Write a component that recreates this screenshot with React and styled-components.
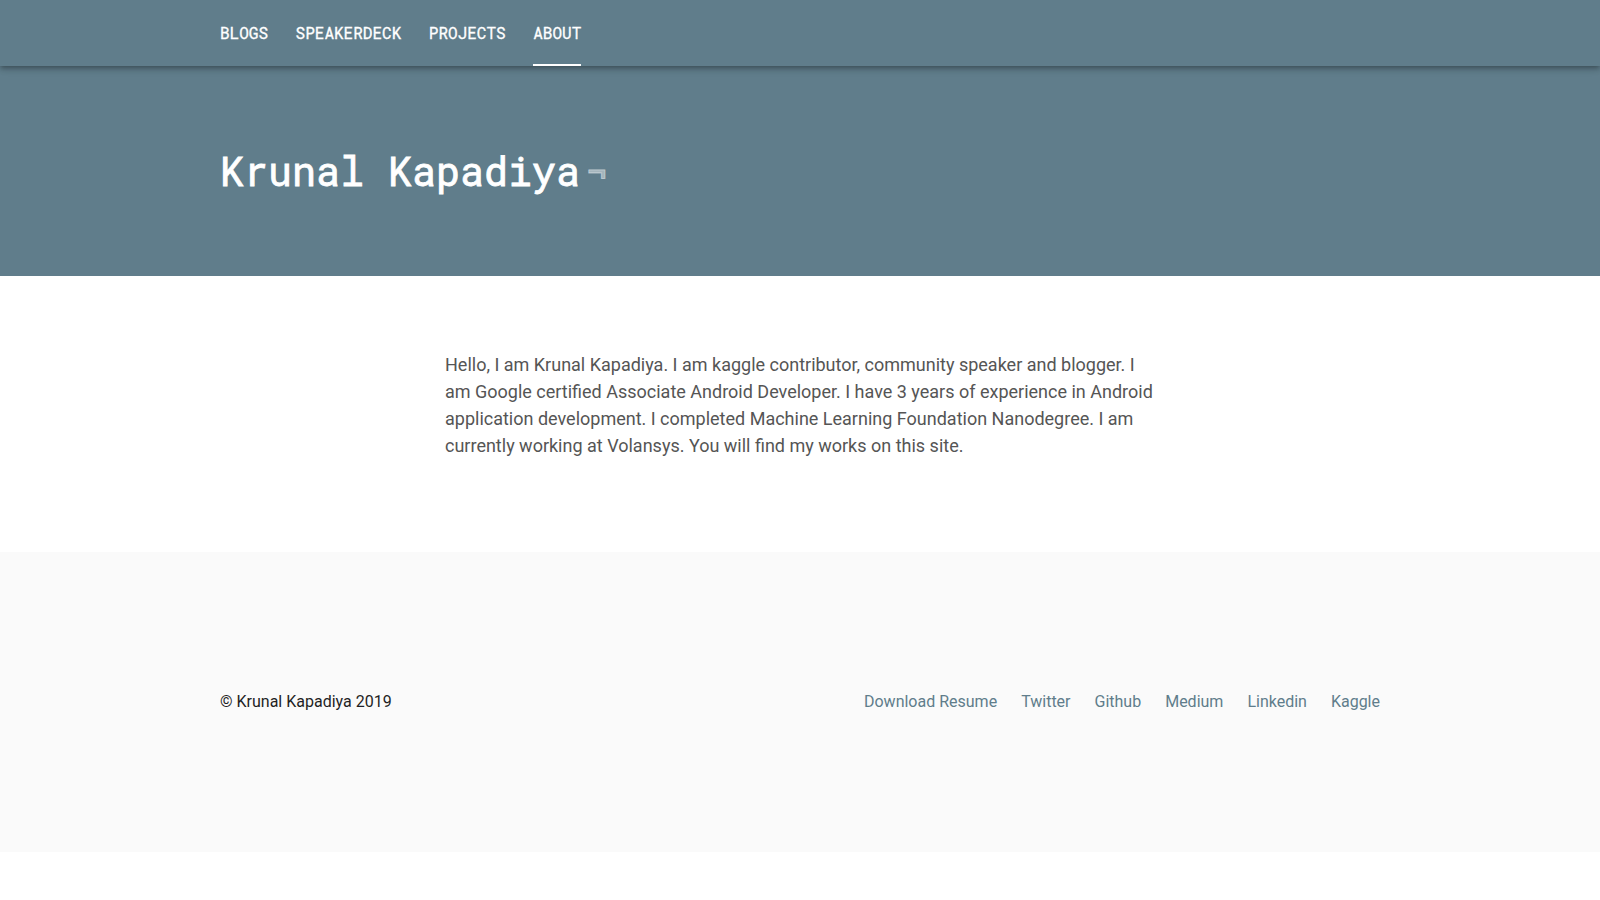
import React from 'react';
import styled, { createGlobalStyle } from 'styled-components';

const GlobalStyle = createGlobalStyle`
  html, body {
    margin: 0;
    padding: 0;
    background: #ffffff;
  }
  body {
    font-family: Roboto, "Liberation Sans", sans-serif;
  }
`;

const Page = styled.div`
  display: flex;
  flex-direction: column;
  min-height: 900px;
`;

const NavBar = styled.nav`
  position: relative;
  z-index: 2;
  height: 66px;
  background: #607d8b;
  box-shadow: 0 2px 4px -1px rgba(0, 0, 0, 0.2), 0 4px 5px 0 rgba(0, 0, 0, 0.14),
    0 1px 10px 0 rgba(0, 0, 0, 0.12);
`;

const Container = styled.div`
  width: 1160px;
  margin: 0 auto;
  height: 100%;
`;

const NavList = styled.ul`
  display: flex;
  gap: 27.6px;
  list-style: none;
  margin: 0;
  padding: 0;
  height: 100%;
`;

const NavItem = styled.li`
  display: flex;
  align-items: center;
  height: 100%;
  box-sizing: border-box;
  font-family: "Roboto Mono", "DejaVu Sans Mono", monospace;
  font-size: 16px;
  color: #ffffff;
  -webkit-text-stroke: 0.3px #ffffff;
  border-bottom: 2px solid ${props => (props.active ? '#ffffff' : 'transparent')};
  cursor: pointer;
`;

const Hero = styled.header`
  background: #607d8b;
  padding: 81px 0 81px;
`;

const Title = styled.h1`
  margin: 0;
  font-family: "Roboto Mono", "DejaVu Sans Mono", monospace;
  font-weight: 400;
  font-size: 40px;
  line-height: 48px;
  color: #ffffff;
  -webkit-text-stroke: 0.8px #ffffff;
`;

const Cursor = styled.span`
  margin-left: 5px;
  color: rgba(255, 255, 255, 0.45);
  -webkit-text-stroke: 0.8px rgba(255, 255, 255, 0.45);
`;

const Main = styled.main`
  padding: 75px 0 93px;
`;

const Intro = styled.p`
  width: 712px;
  margin: 0 auto;
  padding-left: 2px;
  font-size: 18px;
  line-height: 27px;
  color: #555555;
`;

const Footer = styled.footer`
  background: #fafafa;
  height: 300px;
  display: flex;
  align-items: center;
`;

const FooterRow = styled.div`
  width: 1160px;
  margin: 0 auto;
  display: flex;
  align-items: center;
  justify-content: space-between;
  font-size: 16px;
  line-height: 24px;
`;

const Copyright = styled.span`
  color: #1f1f24;
`;

const Links = styled.div`
  display: flex;
  gap: 24px;
`;

const FooterLink = styled.a`
  color: #607d8b;
  text-decoration: none;
`;

const navItems = ['BLOGS', 'SPEAKERDECK', 'PROJECTS', 'ABOUT'];
const footerLinks = ['Download Resume', 'Twitter', 'Github', 'Medium', 'Linkedin', 'Kaggle'];

export default function App() {
  return (
    <Page>
      <GlobalStyle />
      <NavBar>
        <Container>
          <NavList>
            {navItems.map(item => (
              <NavItem key={item} active={item === 'ABOUT'}>{item}</NavItem>
            ))}
          </NavList>
        </Container>
      </NavBar>
      <Hero>
        <Container>
          <Title>
            Krunal Kapadiya<Cursor>¬</Cursor>
          </Title>
        </Container>
      </Hero>
      <Main>
        <Intro>
          Hello, I am Krunal Kapadiya. I am kaggle contributor, community speaker and blogger. I
          am Google certified Associate Android Developer. I have 3 years of experience in Android
          application development. I completed Machine Learning Foundation Nanodegree. I am
          currently working at Volansys. You will find my works on this site.
        </Intro>
      </Main>
      <Footer>
        <FooterRow>
          <Copyright>© Krunal Kapadiya 2019</Copyright>
          <Links>
            {footerLinks.map(link => (
              <FooterLink key={link} href="#">{link}</FooterLink>
            ))}
          </Links>
        </FooterRow>
      </Footer>
    </Page>
  );
}
